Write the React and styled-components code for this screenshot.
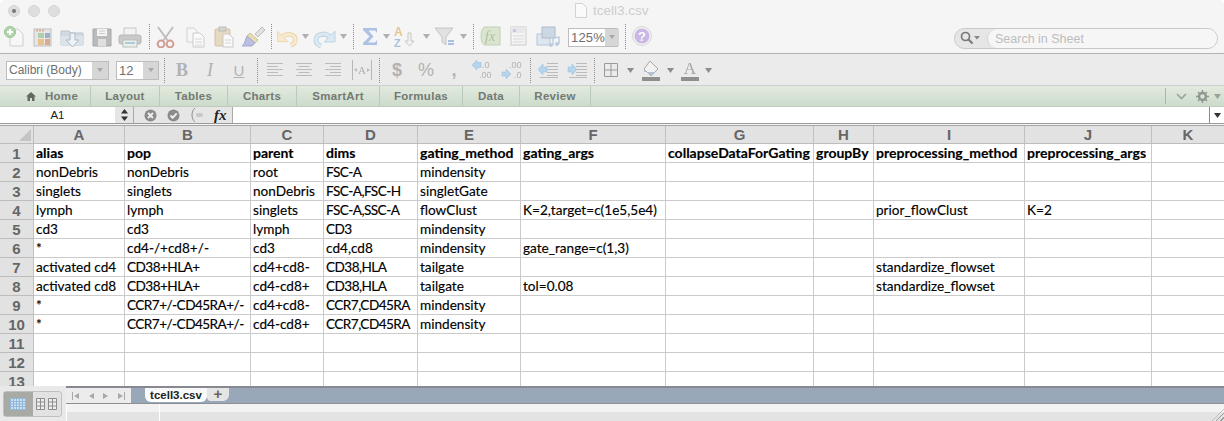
import React from 'react'
import styled, { createGlobalStyle } from 'styled-components'

const GlobalStyle = createGlobalStyle`
html, body { margin: 0; padding: 0; background: #fff; overflow: hidden; }
body { font-family: "Liberation Sans", Arial, sans-serif; }
* { box-sizing: border-box; }
`

const COLS = [34, 91, 126, 73, 94, 103, 145, 148, 60, 151, 127, 73]
const LETTERS = ['A', 'B', 'C', 'D', 'E', 'F', 'G', 'H', 'I', 'J', 'K']
const ROWS = [
  ['alias', 'pop', 'parent', 'dims', 'gating_method', 'gating_args', 'collapseDataForGating', 'groupBy', 'preprocessing_method', 'preprocessing_args'],
  ['nonDebris', 'nonDebris', 'root', 'FSC-A', 'mindensity'],
  ['singlets', 'singlets', 'nonDebris', 'FSC-A,FSC-H', 'singletGate'],
  ['lymph', 'lymph', 'singlets', 'FSC-A,SSC-A', 'flowClust', 'K=2,target=c(1e5,5e4)', '', '', 'prior_flowClust', 'K=2'],
  ['cd3', 'cd3', 'lymph', 'CD3', 'mindensity'],
  ['*', 'cd4-/+cd8+/-', 'cd3', 'cd4,cd8', 'mindensity', 'gate_range=c(1,3)'],
  ['activated cd4', 'CD38+HLA+', 'cd4+cd8-', 'CD38,HLA', 'tailgate', '', '', '', 'standardize_flowset'],
  ['activated cd8', 'CD38+HLA+', 'cd4-cd8+', 'CD38,HLA', 'tailgate', 'tol=0.08', '', '', 'standardize_flowset'],
  ['*', 'CCR7+/-CD45RA+/-', 'cd4+cd8-', 'CCR7,CD45RA', 'mindensity'],
  ['*', 'CCR7+/-CD45RA+/-', 'cd4-cd8+', 'CCR7,CD45RA', 'mindensity'],
  [],
  [],
  [],
]
const TABS = [['Home', 91], ['Layout', 69], ['Tables', 68], ['Charts', 69], ['SmartArt', 83], ['Formulas', 83], ['Data', 57], ['Review', 71]]

const Window = styled.div`
width: 1224px;
height: 421px;
display: flex;
flex-direction: column;
overflow: hidden;
background: #f5f5f5;
border-radius: 5px 5px 0 0;
`
const TitleBar = styled.div`
height: 22px;
flex: none;
display: flex;
align-items: center;
position: relative;
padding-left: 8px;
gap: 8px;
`
const Light = styled.span`
width: 12px;
height: 12px;
border-radius: 50%;
background: #dedede;
border: 1px solid #d4d4d4;
display: flex;
align-items: center;
justify-content: center;
&::after {
  content: "";
  width: 4px;
  height: 4px;
  border-radius: 50%;
  background: ${(p) => (p.$dot ? '#777' : 'transparent')};
}
`
const Title = styled.div`
position: absolute;
left: 575px;
top: 3px;
display: flex;
align-items: center;
gap: 6px;
font-size: 13.5px;
color: #cdcdcd;
`
const ToolBar = styled.div`
height: 32px;
flex: none;
display: flex;
align-items: center;
border-bottom: 1px solid #b2b2b2;
padding-bottom: 3px;
svg { filter: blur(0.3px); opacity: 0.85; }
`
const Slot = styled.div`
width: ${(p) => p.$w}px;
flex: none;
display: flex;
align-items: center;
justify-content: center;
`
const Dots = styled.div`
width: 1px;
height: 25px;
border-left: 1px dotted #8c8c8c;
`
const ZoomBox = styled.div`
width: 50px;
height: 19px;
margin: 2px 0 0 6px;
flex: none;
display: flex;
background: #fff;
border: 1px solid #bdbdbd;
font-size: 13px;
color: #6d6d6d;
align-items: center;
padding-left: 2px;
letter-spacing: 0.2px;
justify-content: space-between;
`
const SelectArrow = styled.span`
width: ${(p) => p.$w || 14}px;
align-self: stretch;
flex: none;
display: flex;
align-items: center;
justify-content: center;
background: #d6d6d6;
&::after {
  content: "";
  border: 3px solid transparent;
  border-top: 4px solid #a8a8a8;
  border-bottom: 0;
}
`
const Search = styled.div`
margin: 4px 6px 0 auto;
width: 264px;
height: 21px;
border: 1px solid #c8c8c8;
border-radius: 11px;
background: #e6e6e6;
display: flex;
align-items: center;
padding-left: 5px;
`
const SearchInput = styled.div`
flex: 1;
margin-left: 6px;
align-self: stretch;
background: #f6f6f6;
border-left: 1px solid #d2d2d2;
border-radius: 10px;
font-size: 12.5px;
line-height: 20px;
padding-left: 7px;
color: #bdbdbd;
`
const FormatBar = styled.div`
height: 32px;
flex: none;
display: flex;
align-items: center;
background: #ebebeb;
border-bottom: 1px solid #c9cfc9;
padding: 1px 0 0 6px;
svg { filter: blur(0.25px); }
`
const FontSelect = styled.div`
width: ${(p) => p.$w}px;
height: 19px;
flex: none;
margin-right: ${(p) => p.$mr || 0}px;
display: flex;
align-items: center;
justify-content: space-between;
background: #fff;
border: 1px solid #bdbdbd;
font-size: ${(p) => p.$size}px;
padding-left: 2px;
color: #6f6f6f;
`
const FormatGlyph = styled.span`
font-family: ${(p) => (p.$sans ? '"Liberation Sans", sans-serif' : '"Liberation Serif", serif')};
font-size: ${(p) => p.$size || 18}px;
font-weight: ${(p) => (p.$bold ? 700 : 400)};
font-style: ${(p) => (p.$italic ? 'italic' : 'normal')};
text-decoration: ${(p) => (p.$under ? 'underline' : 'none')};
color: #b2b2b2;
`
const FxGlyph = styled.span`
font-family: "Liberation Serif", serif;
font-size: 15px;
font-weight: 700;
font-style: italic;
color: #222;
`
const Ribbon = styled.div`
height: 21px;
flex: none;
display: flex;
align-items: stretch;
background: linear-gradient(#e2eade, #ccdbcc);
border-bottom: 1px solid #bccdbc;
`
const RibbonTab = styled.div`
width: ${(p) => p.$w}px;
flex: none;
display: flex;
align-items: center;
justify-content: center;
gap: 9px;
font-size: 11.5px;
font-weight: 700;
letter-spacing: 0.3px;
color: #737973;
border-right: 1px solid #b8cab9;
padding-left: ${(p) => p.$pl || 0}px;
`
const RibbonEnd = styled.div`
margin-left: auto;
display: flex;
align-items: center;
padding-right: 3px;
`
const RibbonRule = styled.div`
width: 1px;
height: 16px;
background: #a9b5aa;
margin-right: 6px;
`
const FormulaBar = styled.div`
height: 17px;
flex: none;
display: flex;
align-items: stretch;
background: #e6e6e6;
border-bottom: 1px solid #9a9a9a;
`
const NameBox = styled.div`
width: 115px;
flex: none;
background: #fff;
font-size: 11.5px;
text-align: center;
line-height: 16px;
color: #222;
`
const Stepper = styled.div`
width: 19px;
flex: none;
display: flex;
align-items: center;
justify-content: center;
border-right: 1px solid #a9a9a9;
`
const FormulaButtons = styled.div`
width: 99px;
flex: none;
display: flex;
align-items: center;
padding-left: 10px;
gap: 10px;
border-right: 1px solid #a9a9a9;
`
const FormulaInput = styled.div`
flex: 1;
background: #fff;
`
const FormulaEnd = styled.div`
width: 15px;
flex: none;
background: #fff;
border-left: 1px solid #8d8d8d;
display: flex;
align-items: center;
justify-content: center;
`
const Sheet = styled.div`
flex: none;
height: 261px;
overflow: hidden;
display: grid;
grid-template-columns: ${COLS.join('px ')}px;
grid-auto-rows: 19px;
grid-template-rows: 18px;
background: #fff;
border-top: 1px solid #a5a5a5;
margin-top: 1px;
`
const Corner = styled.div`
background: #e2e2e2;
border-right: 1px solid #bdbdbd;
border-bottom: 1px solid #bdbdbd;
position: relative;
&::after {
  content: "";
  position: absolute;
  right: 2px;
  bottom: 2px;
  border: 6px solid transparent;
  border-right-color: #c4c4c4;
  border-bottom-color: #c4c4c4;
}
`
const HeaderCell = styled.div`
background: #e2e2e2;
border-right: 1px solid #c0c0c0;
border-bottom: 1px solid #bdbdbd;
font-size: 15px;
font-weight: 700;
text-align: center;
line-height: 17px;
color: #666;
`
const RowHead = styled(HeaderCell)`
line-height: 19px;
`
const Cell = styled.div`
border-right: 1px solid #cbcbcb;
border-bottom: 1px solid #cbcbcb;
font-family: Lato, "Liberation Sans", sans-serif;
font-size: ${(p) => (p.$bold ? 14 : 13.6)}px;
font-weight: ${(p) => (p.$bold ? 700 : 400)};
letter-spacing: ${(p) => (p.$tight ? '-0.55px' : 'normal')};
line-height: 18px;
padding-left: 2px;
white-space: nowrap;
color: #000;
-webkit-text-stroke: 0.15px #000;
`
const Footer = styled.div`
flex: 1;
display: flex;
min-height: 0;
background: #e4e4e4;
`
const ViewSwitch = styled.div`
width: 66px;
flex: none;
display: flex;
align-items: center;
background: #e9e9e9;
padding: 1px 0 0 3px;
`
const ViewGroup = styled.div`
width: 59px;
height: 26px;
display: flex;
border: 1px solid #c0c0c0;
border-radius: 3px;
background: #e2e2e2;
`
const ViewButton = styled.div`
flex: 1;
display: flex;
align-items: center;
justify-content: center;
background: ${(p) => (p.$on ? '#a9a9a6' : 'transparent')};
`
const FooterMain = styled.div`
flex: 1;
display: flex;
flex-direction: column;
`
const SheetBar = styled.div`
height: 18px;
flex: none;
display: flex;
background: #98a8b8;
border-top: 2px solid #868a90;
border-bottom: 1px solid #8c8f94;
`
const Pager = styled.div`
width: 65px;
flex: none;
display: flex;
align-items: center;
justify-content: space-around;
background: #ececec;
padding: 0 2px;
margin-right: 14px;
`
const SheetTab = styled.div`
width: 62px;
height: 14px;
flex: none;
background: linear-gradient(#f7f7f7, #fff);
border-radius: 0 0 6px 6px;
font-size: 11.5px;
font-weight: 700;
text-align: center;
line-height: 14px;
color: #222;
`
const AddTab = styled.div`
width: 22px;
height: 13px;
flex: none;
background: #e5e5e5;
border-radius: 0 0 6px 4px;
font-size: 15px;
font-weight: 700;
text-align: center;
line-height: 12px;
color: #666;
`
const HScroll = styled.div`
flex: 1;
display: flex;
background: linear-gradient(#f2f2f2 0 8px, #e3e3e3 8px);
position: relative;
border-left: 1px solid #fff;
`
const ScrollLeft = styled.div`
width: 93px;
flex: none;
border-right: 1px solid #fff;
`
const Grip = styled.div`
position: absolute;
right: 0;
bottom: 0;
width: 12px;
height: 12px;
background: repeating-linear-gradient(135deg, transparent 0 2px, #9a9a9a 2px 3px);
clip-path: polygon(100% 0, 100% 100%, 0 100%);
`

const Caret = ({ color = '#a5a5a5' }) => (
  <svg width="7" height="5" viewBox="0 0 7 5" style={{ flex: 'none' }}><path d="M0 0h7L3.5 5z" fill={color} /></svg>
)
const Ico = ({ w = 24, h = 24, children }) => (
  <svg width={w} height={h} viewBox={`0 0 ${w} ${h}`}>{children}</svg>
)
const NewIcon = () => (
  <Ico>
    <path d="M7 5h8l5 5v12H7z" fill="#f8f8f8" stroke="#c8c8c8" />
    <circle cx="7" cy="8" r="5.5" fill="#a7d0a0" stroke="#8bb886" />
    <path d="M7 5v6M4 8h6" stroke="#fff" strokeWidth="2" />
  </Ico>
)
const GalleryIcon = () => (
  <Ico>
    <rect x="4" y="5" width="17" height="17" fill="#e4e4e4" stroke="#b5b5b5" />
    <path d="M6 6.5h9" stroke="#d9a080" strokeWidth="2" strokeDasharray="2 1" />
    <rect x="8" y="9" width="6" height="5" fill="#a3c8a0" />
    <rect x="15" y="9" width="5" height="5" fill="#8aa3c8" />
    <rect x="8" y="15" width="6" height="6" fill="#e5bb7a" />
    <rect x="15" y="15" width="5" height="6" fill="#d99a85" />
  </Ico>
)
const OpenIcon = () => (
  <Ico w={28}>
    <path d="M3 7h8l2 2h12v12H3z" fill="#c9d6e0" stroke="#b0bcc6" />
    <path d="M3 12h22v9H3z" fill="#d8e2ea" />
    <path d="M12 9h5v7h4l-6.500 7-6.500-7h4z" fill="#eef2f5" stroke="#a2afba" />
  </Ico>
)
const SaveIcon = () => (
  <Ico>
    <path d="M3 5h18v17H3z" fill="#b0b0b0" stroke="#9a9a9a" />
    <rect x="7" y="5" width="10" height="7" fill="#f4f4f4" />
    <path d="M9 7h6M9 9.500h6" stroke="#c5c5c5" />
    <rect x="8" y="15" width="8" height="7" fill="#dcdcdc" />
  </Ico>
)
const PrintIcon = () => (
  <Ico w={28}>
    <rect x="8" y="4" width="12" height="8" fill="#f3f3f3" stroke="#c0c0c0" />
    <rect x="3" y="11" width="22" height="9" rx="2" fill="#c2c2c2" stroke="#ababab" />
    <rect x="7" y="16" width="14" height="7" fill="#e8f0ea" stroke="#b0b8b2" />
    <path d="M9 19h10" stroke="#9fc4d4" strokeWidth="2" />
  </Ico>
)
const CutIcon = () => (
  <Ico w={28}>
    <path d="M6 3l10 14M21 3L11 17" stroke="#b5b5b5" strokeWidth="2" />
    <circle cx="9" cy="20" r="3.4" fill="none" stroke="#c98e80" strokeWidth="2" />
    <circle cx="18" cy="20" r="3.4" fill="none" stroke="#c98e80" strokeWidth="2" />
  </Ico>
)
const CopyIcon = () => (
  <Ico>
    <path d="M4 4h7l3 3v11H4z" fill="#f7f7f7" stroke="#cccccc" />
    <path d="M10 9h7l4 4v10H10z" fill="#fbfbfb" stroke="#c4c4c4" />
    <path d="M12 15h7M12 18h7M12 21h7" stroke="#d0d0d0" />
  </Ico>
)
const PasteIcon = () => (
  <Ico>
    <rect x="3" y="5" width="15" height="17" rx="1" fill="#e4d5b8" stroke="#cbbb9b" />
    <rect x="7" y="3" width="7" height="4" fill="#d0d0d0" stroke="#b2b2b2" />
    <path d="M11 10h6l4 4v9H11z" fill="#fafafa" stroke="#c2c2c2" />
    <path d="M13 16h6M13 19h6" stroke="#d0d0d0" />
  </Ico>
)
const BrushIcon = () => (
  <Ico w={28}>
    <path d="M16 10l7-7 3 3-7 7z" fill="#dcdcdc" stroke="#b5b5b5" />
    <path d="M11 9l8 7-3 3-8-7z" fill="#e8d7a8" stroke="#c9b687" />
    <path d="M8 12l8 7-3 3H3c3-2 3-6 5-10z" fill="#b1b4de" stroke="#9a9dcc" />
  </Ico>
)
const UndoIcon = ({ flip }) => {
  const edge = flip ? '#b4d0e0' : '#e6cf9c'
  const fill = flip ? '#d8e8f2' : '#f8e9c8'
  return (
    <Ico w={28}>
      <g transform={flip ? 'translate(28 0) scale(-1 1)' : undefined}>
        <path d="M9 13C14 8 23 10 23 16C23 19 21 21 18 22" fill="none" stroke={edge} strokeWidth="5" />
        <path d="M4 7v11h11z" fill={fill} stroke={edge} />
        <path d="M9 13C14 8 23 10 23 16C23 19 21 21 18 22" fill="none" stroke={fill} strokeWidth="3" />
      </g>
    </Ico>
  )
}
const SumIcon = () => (
  <Ico w={20}>
    <path d="M3 4h14v5l-2-2.500H8.500l5 6-5.500 6h7l2-2.500v5H3v-2l6.500-6.500L3 6z" fill="#a0b9e0" />
  </Ico>
)
const SortIcon = () => (
  <Ico w={26}>
    <text x="2" y="12" fontFamily="Liberation Sans, sans-serif" fontWeight="700" fontSize="12" fill="#e1bf7f">A</text>
    <text x="2" y="23" fontFamily="Liberation Sans, sans-serif" fontWeight="700" fontSize="11" fill="#9ab6dc">Z</text>
    <path d="M16 9h3v8h3l-4.500 5-4.500-5h3z" fill="#f3f3f3" stroke="#bcbcbc" />
  </Ico>
)
const FilterIcon = () => (
  <Ico w={22}>
    <path d="M1 4h18l-7 9v8l-4-3v-5z" fill="#dedede" stroke="#bcbcbc" />
    <path d="M14 17h6M14 20h6" stroke="#9db9e0" strokeWidth="2" />
  </Ico>
)
const FxBox = () => (
  <Ico w={22}>
    <path d="M5 3h16v18H5C1 18 1 6 5 3z" fill="#d5e3c9" stroke="#b9cbac" />
    <text x="6" y="17" fontFamily="Liberation Serif, serif" fontStyle="italic" fontSize="14" fill="#a3b596">fx</text>
  </Ico>
)
const ToolboxIcon = () => (
  <Ico w={18}>
    <rect x="1" y="3" width="15" height="18" fill="#f4f4f4" stroke="#c4c4c4" />
    <rect x="1" y="3" width="15" height="6" fill="#e6e6e6" />
    <path d="M3 12h11M3 15h11M3 18h11" stroke="#d5d5d5" />
    <rect x="3" y="5" width="3" height="3" fill="#b4c7e0" />
  </Ico>
)
const MediaIcon = () => (
  <Ico w={26}>
    <rect x="2" y="10" width="13" height="11" fill="#dbe5f1" stroke="#acbdd1" />
    <rect x="7" y="3" width="13" height="11" fill="#c5d2e2" stroke="#a2b3c6" />
    <circle cx="16" cy="21" r="2" fill="#aec6dc" />
    <circle cx="22" cy="20" r="2" fill="#aec6dc" />
    <path d="M18 21v-7l6-1v7" fill="none" stroke="#aec6dc" strokeWidth="1.4" />
  </Ico>
)
const HelpIcon = () => (
  <Ico w={20}>
    <circle cx="10" cy="12" r="9.5" fill="#f1f1f1" stroke="#d2d2d2" />
    <circle cx="10" cy="12" r="7.5" fill="#c4ade4" />
    <text x="10" y="17" textAnchor="middle" fontFamily="Liberation Sans, sans-serif" fontWeight="700" fontSize="13" fill="#fff">?</text>
  </Ico>
)
const SearchIcon = () => (
  <svg width="21" height="14" viewBox="0 0 21 14">
    <circle cx="5.5" cy="5.5" r="4" fill="none" stroke="#666" strokeWidth="1.7" />
    <path d="M8.5 8.5l4 4" stroke="#666" strokeWidth="2.2" />
    <path d="M14 5h6l-3 3.500z" fill="#777" />
  </svg>
)
const AlignIcon = ({ mode }) => {
  const long = 16
  const lines = [long, 11, long, 11, long].map((w, i) => {
    const x = mode === 'left' ? 1 : mode === 'right' ? 17 - w : 9 - w / 2
    return <path key={i} d={`M${x} ${3 + i * 3}.5h${w}`} stroke="#bcbcbc" />
  })
  return <Ico w={18} h={20}>{lines}</Ico>
}
const MergeIcon = () => (
  <Ico w={22} h={22}>
    <path d="M1.5 1v20M20.5 1v20" stroke="#b6b6b6" />
    <text x="11" y="15" textAnchor="middle" fontFamily="Liberation Serif, serif" fontSize="11" fill="#b0b0b0">A</text>
    <path d="M3 11l3-2v4zM19 11l-3-2v4z" fill="#bcbcbc" />
  </Ico>
)
const DecimalIcon = ({ more }) => (
  <svg width="24" height="22" viewBox="0 0 24 22">
    <path d={more ? 'M1 13h4v-3l5 5-5 5v-3H1z' : 'M10 3.500H6V1L1 6l5 5V8.500h4z'} fill="#b6d4ec" stroke="#97bcd9" strokeWidth="0.5" />
    <text x={more ? 8 : 11} y="9" fontFamily="Liberation Sans, sans-serif" fontSize="9" fill="#b2b2b2">{more ? '.00' : '.0'}</text>
    <text x={more ? 13 : 8} y="19" fontFamily="Liberation Sans, sans-serif" fontSize="9" fill="#b2b2b2">{more ? '.0' : '.00'}</text>
  </svg>
)
const IndentIcon = ({ flip }) => (
  <Ico w={22} h={18}>
    <path d="M10 2.5h11M10 5.500h11M10 8.500h11M10 11.500h11M10 14.500h11M3 16.500h18" stroke="#bababa" />
    <path d={flip ? 'M2 6h4V3l5 5.500-5 5.500v-3H2z' : 'M10 6H6V3L1 8.500 6 14v-3h4z'} fill="#b6d4ec" stroke="#97bcd9" strokeWidth="0.5" />
  </Ico>
)
const BorderIcon = () => (
  <Ico w={14} h={14}>
    <path d="M.5.5h13v13H.5zM7 .5v13M.5 7h13" fill="none" stroke="#9a9a9a" />
  </Ico>
)
const FillIcon = () => (
  <Ico w={20} h={22}>
    <path d="M9 2l8 8-7 7-7-7z" fill="#f2f2f2" stroke="#a6a6a6" />
    <path d="M3 10l7 7 4-4H3z" fill="#b2c4d6" />
    <rect x="1" y="18" width="18" height="4" fill="#8f8f8f" />
  </Ico>
)
const TextColorIcon = () => (
  <Ico w={20} h={22}>
    <text x="10" y="15" textAnchor="middle" fontFamily="Liberation Serif, serif" fontSize="17" fill="#a5a5a5">A</text>
    <rect x="1" y="18" width="18" height="4" fill="#8f8f8f" />
  </Ico>
)
const HomeIcon = () => (
  <svg width="10" height="9" viewBox="0 0 10 9"><path d="M5 0l5 4.500H8.500V9H6V6H4v3H1.500V4.500H0z" fill="#626862" /></svg>
)
const Chevron = () => (
  <svg width="11" height="7" viewBox="0 0 11 7"><path d="M1 1l4.500 4.500L10 1" fill="none" stroke="#98a298" strokeWidth="1.6" /></svg>
)
const Gear = () => (
  <svg width="13" height="13" viewBox="0 0 13 13">
    <circle cx="6.5" cy="6.5" r="3.5" fill="none" stroke="#8f968f" strokeWidth="2.4" />
    <path d="M6.5 0v2M6.5 11v2M0 6.5h2M11 6.500h2M2 2l1.500 1.500M9.500 9.500L11 11M11 2L9.500 3.500M3.500 9.500L2 11" stroke="#8f968f" strokeWidth="1.5" />
  </svg>
)
const RoundBtn = ({ cross }) => (
  <svg width="13" height="13" viewBox="0 0 13 13">
    <circle cx="6.5" cy="6.5" r="6" fill="#8b8b8b" />
    {cross
      ? <path d="M4 4l5 5M9 4l-5 5" stroke="#eee" strokeWidth="2" />
      : <path d="M3.5 6.500l2.200 2.300 4-4.500" fill="none" stroke="#eee" strokeWidth="2" />}
  </svg>
)
const ParenBtn = () => (
  <svg width="14" height="16" viewBox="0 0 14 16">
    <path d="M5 1C1 4 1 12 5 15" fill="none" stroke="#8f8f8f" />
    <rect x="6" y="6" width="7" height="4" rx="2" fill="#c8c8c8" />
  </svg>
)
const StepperIcon = () => (
  <svg width="7" height="12" viewBox="0 0 7 12"><path d="M3.5 0L7 4.500H0zM3.500 12L0 7.500h7z" fill="#333" /></svg>
)
const PageArrow = ({ dir, bar }) => (
  <svg width="8" height="8" viewBox="0 0 8 8">
    <path d={dir === 'l' ? 'M7 1v6L2 4z' : 'M1 1v6l5-3z'} fill="#a8a8a8" />
    {bar && <path d={dir === 'l' ? 'M.5 0v8' : 'M7.5 0v8'} stroke="#a8a8a8" />}
  </svg>
)
const NormalView = () => (
  <svg width="16" height="12" viewBox="0 0 16 12">
    <path d="M.5.5h15v11H.5zM.5 3.500h15M.5 6h15M.5 8.500h15M3.500.5v11M6.500.5v11M9.500.5v11M12.500.5v11" fill="#cfe0f0" stroke="#8fb8dc" strokeWidth="1" />
  </svg>
)
const PageView = () => (
  <svg width="21" height="12" viewBox="0 0 21 12">
    <path d="M.5.5h8v11h-8zM.5 4h8M.5 8h8M4.500.5v11M12.500.5h8v11h-8zM12.500 4h8M12.500 8h8M16.500.5v11" fill="#eee" stroke="#8d8d8d" />
  </svg>
)

const TOOLS = [
  [NewIcon, 30], [GalleryIcon, 24], [OpenIcon, 36], [SaveIcon, 24], [PrintIcon, 32], ['sep', 6],
  [CutIcon, 28], [CopyIcon, 30], [PasteIcon, 28], [BrushIcon, 30], ['sep', 6],
  [UndoIcon, 26], ['caret', 10], ['redo', 30], ['caret', 6], ['sep', 14],
  [SumIcon, 20], ['caret', 12], [SortIcon, 26], ['caret', 16], [FilterIcon, 22], ['caret', 14], ['sep', 6],
  [FxBox, 28], [ToolboxIcon, 30], [MediaIcon, 28],
]

function Tool({ item, w }) {
  if (item === 'sep') return <Slot $w={w}><Dots /></Slot>
  if (item === 'caret') return <Slot $w={w}><Caret /></Slot>
  if (item === 'redo') return <Slot $w={w}><UndoIcon flip /></Slot>
  const Icon = item
  return <Slot $w={w}><Icon /></Slot>
}

export default function App() {
  return (
    <>
      <GlobalStyle />
      <Window>
        <TitleBar>
          <Light $dot />
          <Light />
          <Light />
          <Title>
            <svg width="12" height="15" viewBox="0 0 12 15"><path d="M.5.5h7l4 4v10H.5z" fill="#fafafa" stroke="#d2d2d2" /></svg>
            tcell3.csv
          </Title>
        </TitleBar>
        <ToolBar>
          {TOOLS.map(([item, w], i) => <Tool key={i} item={item} w={w} />)}
          <ZoomBox>125%<SelectArrow /></ZoomBox>
          <Slot $w={14}><Dots /></Slot>
          <Slot $w={20}><HelpIcon /></Slot>
          <Search>
            <SearchIcon />
            <SearchInput>Search in Sheet</SearchInput>
          </Search>
        </ToolBar>
        <FormatBar>
          <FontSelect $w={103} $mr={7} $size={12}>Calibri (Body)<SelectArrow $w={16} /></FontSelect>
          <FontSelect $w={43} $size={13}>12<SelectArrow $w={15} /></FontSelect>
          <Slot $w={10}><Dots /></Slot>
          <Slot $w={26}><FormatGlyph $bold>B</FormatGlyph></Slot>
          <Slot $w={30}><FormatGlyph $italic>I</FormatGlyph></Slot>
          <Slot $w={28}><FormatGlyph $sans $under $size={15}>U</FormatGlyph></Slot>
          <Slot $w={8}><Dots /></Slot>
          <Slot $w={28}><AlignIcon mode="left" /></Slot>
          <Slot $w={30}><AlignIcon mode="center" /></Slot>
          <Slot $w={28}><AlignIcon mode="right" /></Slot>
          <Slot $w={30}><MergeIcon /></Slot>
          <Slot $w={4}><Dots /></Slot>
          <Slot $w={32}><FormatGlyph $sans $bold>$</FormatGlyph></Slot>
          <Slot $w={26}><FormatGlyph $sans>%</FormatGlyph></Slot>
          <Slot $w={30}><FormatGlyph $sans $bold>,</FormatGlyph></Slot>
          <Slot $w={28}><DecimalIcon /></Slot>
          <Slot $w={32}><DecimalIcon more /></Slot>
          <Slot $w={2}><Dots /></Slot>
          <Slot $w={34}><IndentIcon /></Slot>
          <Slot $w={24}><IndentIcon flip /></Slot>
          <Slot $w={10}><Dots /></Slot>
          <Slot $w={24}><BorderIcon /></Slot>
          <Slot $w={14}><Caret color="#8d8d8d" /></Slot>
          <Slot $w={28}><FillIcon /></Slot>
          <Slot $w={10}><Caret color="#8d8d8d" /></Slot>
          <Slot $w={30}><TextColorIcon /></Slot>
          <Slot $w={6}><Caret color="#8d8d8d" /></Slot>
        </FormatBar>
        <Ribbon>
          {TABS.map(([name, w], i) => (
            <RibbonTab key={name} $w={w} $pl={i === 0 ? 14 : 0}>
              {i === 0 && <HomeIcon />}
              {name}
            </RibbonTab>
          ))}
          <RibbonEnd>
            <RibbonRule />
            <Slot $w={18}><Chevron /></Slot>
            <Slot $w={24}><Gear /></Slot>
            <Caret color="#9aa19a" />
          </RibbonEnd>
        </Ribbon>
        <FormulaBar>
          <NameBox>A1</NameBox>
          <Stepper><StepperIcon /></Stepper>
          <FormulaButtons>
            <RoundBtn cross />
            <RoundBtn />
            <ParenBtn />
            <FxGlyph>fx</FxGlyph>
          </FormulaButtons>
          <FormulaInput />
          <FormulaEnd><Caret color="#333" /></FormulaEnd>
        </FormulaBar>
        <Sheet>
          <Corner />
          {LETTERS.map((l) => <HeaderCell key={l}>{l}</HeaderCell>)}
          {ROWS.map((row, r) => (
            <React.Fragment key={r}>
              <RowHead>{r + 1}</RowHead>
              {LETTERS.map((l, c) => (
                <Cell key={l} $bold={r === 0} $tight={/[A-Z]{2}/.test(row[c] || '')}>{row[c] || ''}</Cell>
              ))}
            </React.Fragment>
          ))}
        </Sheet>
        <Footer>
          <ViewSwitch>
            <ViewGroup>
              <ViewButton $on><NormalView /></ViewButton>
              <ViewButton><PageView /></ViewButton>
            </ViewGroup>
          </ViewSwitch>
          <FooterMain>
            <SheetBar>
              <Pager>
                <PageArrow dir="l" bar />
                <PageArrow dir="l" />
                <PageArrow dir="r" />
                <PageArrow dir="r" bar />
              </Pager>
              <SheetTab>tcell3.csv</SheetTab>
              <AddTab>+</AddTab>
            </SheetBar>
            <HScroll>
              <ScrollLeft />
              <Grip />
            </HScroll>
          </FooterMain>
        </Footer>
      </Window>
    </>
  )
}
